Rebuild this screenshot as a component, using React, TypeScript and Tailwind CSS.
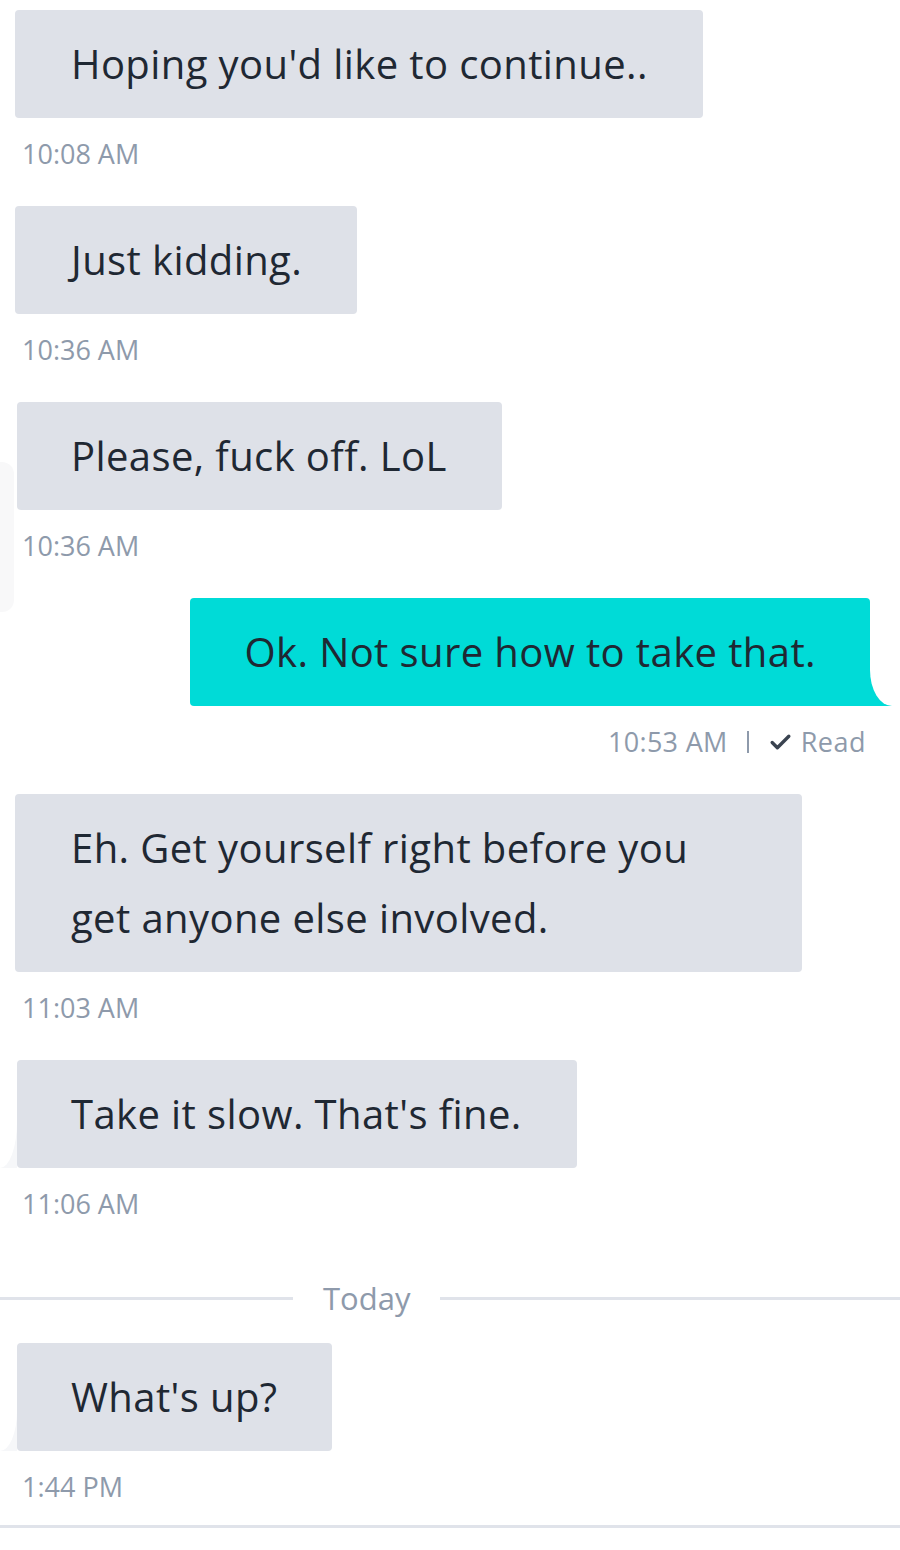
import { Check } from "lucide-react";

type Msg = {
  text: React.ReactNode;
  time: string;
  tail?: "blob" | "curl";
  wide?: boolean;
};

function Received({ text, time, tail, wide }: Msg) {
  return (
    <div className="flex flex-col items-start">
      <div
        className={`relative rounded-[4px] bg-[#dee1e8] py-[19px] pl-[54px] pr-[55px] text-[40px] leading-[70px] tracking-[0.4px] text-[#1f2833] ${
          tail ? "ml-[2px]" : "pl-[56px]"
        } ${wide ? "w-[787px]" : "max-w-[787px]"}`}
      >
        {tail === "curl" && (
          <span className="absolute bottom-0 left-[-17px] h-[46px] w-[17px] bg-[#f6f7f9]">
            <span className="block h-full w-full rounded-br-[100%] bg-white" />
          </span>
        )}
        {tail === "blob" && (
          <span className="absolute left-[-17px] top-[60px] h-[150px] w-[14px] rounded-r-[12px] bg-[#f8f8f9]" />
        )}
        {text}
      </div>
      <div className="mb-[34px] mt-[18px] pl-[7px] text-[27px] leading-[36px] text-[#8e9aab]">
        {time}
      </div>
    </div>
  );
}

function Sent({ text, time }: { text: string; time: string }) {
  return (
    <div className="flex flex-col items-end pr-[15px]">
      <div className="relative rounded-[4px] rounded-br-none bg-[#00dbd7] py-[19px] pl-[55px] pr-[54px] text-[40px] leading-[70px] tracking-[0.4px] text-[#1f2833]">
        <span className="absolute bottom-0 right-[-22px] h-[36px] w-[22px] bg-[#00dbd7]">
          <span className="block h-full w-full rounded-bl-[100%] bg-white" />
        </span>
        {text}
      </div>
      <div className="mb-[34px] mr-[4px] mt-[18px] flex items-center text-[27px] leading-[36px] text-[#8e9aab]">
        <span className="tracking-[0.3px]">{time}</span>
        <span className="mx-[19px] inline-block h-[22px] w-[2px] bg-[#8e9aab]" />
        <Check className="mr-[8px] h-[25px] w-[25px] text-[#3a4350]" strokeWidth={3.2} />
        <span className="tracking-[0.5px]">Read</span>
      </div>
    </div>
  );
}

export default function App() {
  return (
    <div className="min-h-[1550px] overflow-hidden bg-white pt-[10px] font-['Open_Sans',sans-serif]">
      <div className="px-[15px]">
        <Received text="Hoping you'd like to continue.." time="10:08 AM" />
        <Received text="Just kidding." time="10:36 AM" />
        <Received text="Please, fuck off. LoL" time="10:36 AM" tail="blob" />
        <Sent text="Ok. Not sure how to take that." time="10:53 AM" />
        <Received
          wide
          text={
            <>
              Eh. Get yourself right before you
              <br />
              get anyone else involved.
            </>
          }
          time="11:03 AM"
        />
        <Received text="Take it slow. That's fine." time="11:06 AM" tail="curl" />

        {/* day divider */}
        <div className="-mx-[15px] mb-[27px] mt-[24px] flex items-center">
          <div className="h-[3px] w-[293px] bg-[#e0e3ea]" />
          <div className="px-[30px] text-[31px] leading-[36px] text-[#8e9aab]">Today</div>
          <div className="h-[3px] flex-1 bg-[#e0e3ea]" />
        </div>

        <div className="flex flex-col items-start">
          <div className="relative ml-[2px] rounded-[4px] bg-[#dee1e8] py-[19px] pl-[54px] pr-[55px] text-[40px] leading-[70px] tracking-[0.4px] text-[#1f2833]">
            <span className="absolute bottom-0 left-[-17px] h-[40px] w-[17px] bg-[#f6f7f9]">
              <span className="block h-full w-full rounded-br-[100%] bg-white" />
            </span>
            What's up?
          </div>
          <div className="mb-[20px] mt-[18px] pl-[7px] text-[27px] leading-[36px] text-[#8e9aab]">
            1:44 PM
          </div>
        </div>
        <div className="-mx-[15px] h-[3px] bg-[#e0e3ea]" />
      </div>
    </div>
  );
}
